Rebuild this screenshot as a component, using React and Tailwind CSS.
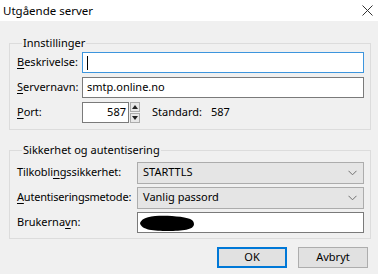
import React from 'react';

const Label = ({ before, u, after, className = '' }) => (
  <span className={`shrink-0 whitespace-nowrap text-[11px] text-black ${className}`}>
    {before}
    <span className="underline underline-offset-2">{u}</span>
    {after}
  </span>
);

const Chevron = () => (
  <svg width="9" height="6" viewBox="0 0 9 6" className="shrink-0">
    <path d="M0.5 0.8 L4.5 4.8 L8.5 0.8" fill="none" stroke="#707070" strokeWidth="1" />
  </svg>
);

const Select = ({ value }) => (
  <div className="flex-1 h-[22px] bg-[#e5e5e5] border border-[#acacac] flex items-center justify-between pl-[5px] pr-[6px]">
    <span className="text-[11px] text-black">{value}</span>
    <Chevron />
  </div>
);

const App = () => {
  return (
    <div className="w-[378px] h-[274px] bg-[#f0f0f0] flex flex-col" style={{ fontFamily: '"Noto Sans", "Open Sans", sans-serif' }}>
      {/* Title bar */}
      <div className="h-[21px] bg-white flex items-center justify-between pl-[3px] pr-[5px]">
        <span className="text-[11.5px] text-black leading-none">Utgående server</span>
        <svg width="11" height="11" viewBox="0 0 11 11">
          <path d="M0.5 0.5 L10.5 10.5 M10.5 0.5 L0.5 10.5" stroke="#333" strokeWidth="1" />
        </svg>
      </div>

      <div className="pl-[9px] pr-[7px] pt-[14px]">
        {/* Innstillinger */}
        <fieldset className="border border-[#dcdcdc] pl-[7px] pr-[6px] pt-[1px] pb-[6px]">
          <legend className="text-[11px] text-black ml-[5px] px-[1px] leading-[16px]">Innstillinger</legend>
          <div className="flex flex-col gap-1">
            <div className="flex items-center h-[21px]">
              <Label className="w-[65px]" u="B" after="eskrivelse:" />
              <div className="flex-1 h-[21px] bg-white border border-[#3d95dd] flex items-center pl-[4px]">
                <div className="w-[1px] h-[14px] bg-black" />
              </div>
            </div>
            <div className="flex items-center h-[21px]">
              <Label className="w-[65px]" u="S" after="ervernavn:" />
              <div className="flex-1 h-[21px] bg-white border border-[#7a7a7a] flex items-center pl-[4px]">
                <span className="text-[11px] text-black">smtp.online.no</span>
              </div>
            </div>
            <div className="flex items-center h-[21px]">
              <Label className="w-[65px]" u="P" after="ort:" />
              <div className="w-[47px] h-[21px] bg-white border border-[#7a7a7a] flex items-center justify-end pr-[2px]">
                <span className="text-[11px] text-black">587</span>
              </div>
              <div className="flex flex-col w-[10px] h-[21px] ml-[1px]">
                <div className="h-[10px] bg-[#e8e8e8] border border-[#acacac] flex items-center justify-center">
                  <svg width="6" height="4" viewBox="0 0 6 4"><path d="M0 4 L3 0 L6 4 Z" fill="#222" /></svg>
                </div>
                <div className="h-[10px] mt-[1px] bg-[#e8e8e8] border border-[#acacac] flex items-center justify-center">
                  <svg width="6" height="4" viewBox="0 0 6 4"><path d="M0 0 L3 4 L6 0 Z" fill="#222" /></svg>
                </div>
              </div>
              <span className="text-[11px] text-black ml-[12px]">Standard:</span>
              <span className="text-[11px] text-black ml-[9px]">587</span>
            </div>
          </div>
        </fieldset>

        {/* Sikkerhet og autentisering */}
        <fieldset className="border border-[#dcdcdc] pl-[7px] pr-[6px] pt-[4px] pb-[5px] mt-[12px]">
          <legend className="text-[11px] text-black ml-[5px] px-[1px] leading-[16px]">Sikkerhet og autentisering</legend>
          <div className="flex flex-col gap-1">
            <div className="flex items-center h-[21px]">
              <Label className="w-[120px] tracking-[-0.1px]" before="Tilkobli" u="n" after="gssikkerhet:" />
              <Select value="STARTTLS" />
            </div>
            <div className="flex items-center h-[21px]">
              <Label className="w-[120px] tracking-[-0.2px]" u="A" after="utentiseringsmetode:" />
              <Select value="Vanlig passord" />
            </div>
            <div className="flex items-center h-[21px]">
              <Label className="w-[120px]" before="Brukerna" u="v" after="n:" />
              <div className="flex-1 h-[21px] bg-white border border-[#7a7a7a] flex items-end overflow-hidden">
                <svg width="60" height="19" viewBox="0 0 60 19">
                  <path d="M2 10 C4 3 20 2 34 3 C46 4 56 5 56 11 C56 17 44 18 30 18 C16 18 3 17 2 10 Z" fill="#000" />
                </svg>
              </div>
            </div>
          </div>
        </fieldset>
      </div>

      {/* Buttons */}
      <div className="flex justify-end gap-[11px] pr-[10px] mt-[8px]">
        <button className="w-[70px] h-[21px] bg-[#e1e1e1] border-2 border-[#0078d7] text-[11px] text-black">OK</button>
        <button className="w-[70px] h-[21px] bg-[#e1e1e1] border border-[#adadad] text-[11px] text-black">Avbryt</button>
      </div>
    </div>
  );
};

export default App;
